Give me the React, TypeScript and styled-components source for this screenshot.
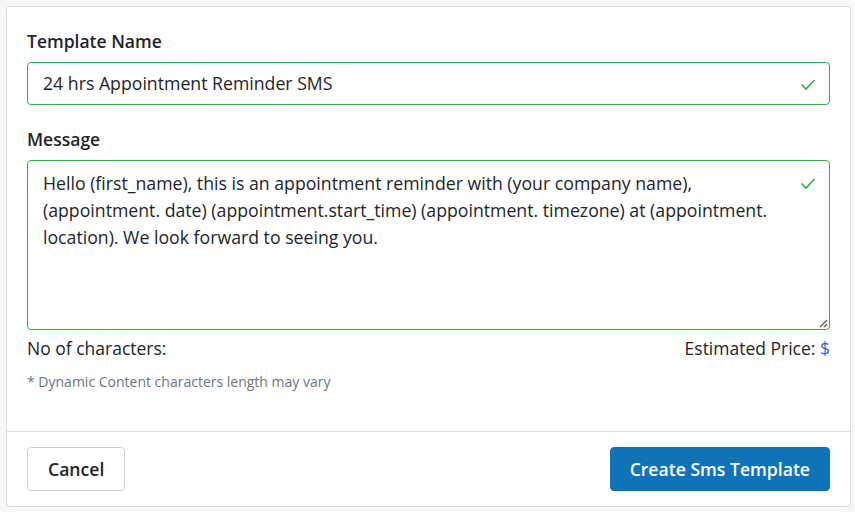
import React from "react";
import styled, { createGlobalStyle } from "styled-components";

const Global = createGlobalStyle`
  html, body { margin: 0; padding: 0; background: #f7f7f7; }
  body { font-family: "Open Sans", "Noto Sans", Arial, sans-serif; color: #212529; }
  * { box-sizing: border-box; }
`;

const Page = styled.div`
  padding: 6px 4px 5px 6px;
  width: 855px;
  height: 512px;
`;

const Card = styled.div`
  background: #fff;
  border: 1px solid #dcdcdc;
  border-radius: 4px;
  height: 501px;
  display: flex;
  flex-direction: column;
`;

const Body = styled.div`
  padding: 22px 20px 0 20px;
  flex: 1;
  display: flex;
  flex-direction: column;
`;

const Label = styled.div`
  font-size: 17.5px;
  font-weight: 600;
  line-height: 24px;
  margin-bottom: 9px;
`;

const Field = styled.div<{ $h: number }>`
  position: relative;
  height: ${(p) => p.$h}px;
  border: 1px solid #2fad48;
  border-radius: 4px;
  padding: ${(p) => (p.$h > 60 ? "9px 40px 0 15px" : "0 40px 0 15px")};
  display: flex;
  align-items: ${(p) => (p.$h > 60 ? "flex-start" : "center")};
  font-size: 17.7px;
  line-height: 27px;
  color: #212529;
  margin-bottom: ${(p) => (p.$h > 60 ? 6 : 22)}px;
`;

const Check = styled.svg`
  position: absolute;
  right: 13px;
  width: 16px;
  height: 16px;
`;

const Resize = styled.svg`
  position: absolute;
  right: 1px;
  bottom: 1px;
  width: 10px;
  height: 10px;
`;

const InfoRow = styled.div`
  display: flex;
  justify-content: space-between;
  font-size: 17.5px;
  line-height: 24px;
  color: #212529;
`;

const Price = styled.span`
  color: #2a6bd0;
`;

const Note = styled.div`
  margin-top: 12px;
  font-size: 14px;
  line-height: 20px;
  color: #6c757d;
`;

const Footer = styled.div`
  border-top: 1px solid #dcdcdc;
  padding: 15px 20px 15px 20px;
  display: flex;
  justify-content: space-between;
`;

const Button = styled.button<{ $primary?: boolean }>`
  font-family: inherit;
  font-size: 17.6px;
  font-weight: 600;
  height: 44px;
  padding: 0 ${(p) => (p.$primary ? 19 : 20)}px;
  border-radius: 4px;
  border: 1px solid ${(p) => (p.$primary ? "#0f73b9" : "#cfcfcf")};
  background: ${(p) => (p.$primary ? "#0f73b9" : "#fff")};
  color: ${(p) => (p.$primary ? "#fff" : "#212529")};
`;

const CheckIcon = ({ top }: { top: number }) => (
  <Check viewBox="0 0 16 16" style={{ top }}>
    <path d="M1.5 8.5 L6 13 L14.5 4" fill="none" stroke="#2fad48" strokeWidth="1.6" />
  </Check>
);

export default function App() {
  return (
    <Page>
      <Global />
      <Card>
        <Body>
          <Label>Template Name</Label>
          <Field $h={43}>
            24 hrs Appointment Reminder SMS
            <CheckIcon top={13} />
          </Field>
          <Label>Message</Label>
          <Field $h={170}>
            <div>
              Hello (first_name), this is an appointment reminder with (your company name),
              (appointment. date) (appointment.start_time) (appointment. timezone) at (appointment.
              location). We look forward to seeing you.
            </div>
            <CheckIcon top={14} />
            <Resize viewBox="0 0 10 10">
              <path d="M9 2 L2 9 M9 6 L6 9" stroke="#555" strokeWidth="1.2" />
            </Resize>
          </Field>
          <InfoRow>
            <span>No of characters:</span>
            <span>
              Estimated Price: <Price>$</Price>
            </span>
          </InfoRow>
          <Note>* Dynamic Content characters length may vary</Note>
        </Body>
        <Footer>
          <Button>Cancel</Button>
          <Button $primary>Create Sms Template</Button>
        </Footer>
      </Card>
    </Page>
  );
}
